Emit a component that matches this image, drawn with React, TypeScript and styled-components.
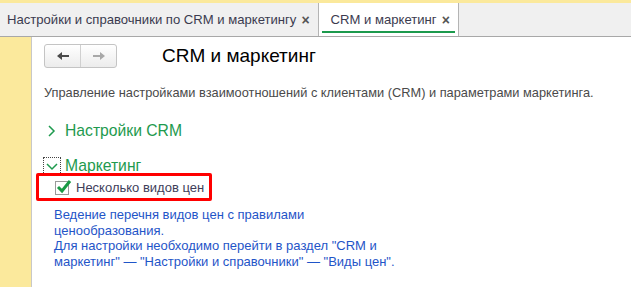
import React from 'react'
import styled, { createGlobalStyle } from 'styled-components'

const GlobalStyle = createGlobalStyle`
  html, body {
    margin: 0;
    padding: 0;
    background: #fff;
  }
  body {
    font-family: Arial, "Liberation Sans", sans-serif;
    width: 631px;
    height: 287px;
    overflow: hidden;
  }
`

const Page = styled.div`
  display: flex;
  flex-direction: column;
  width: 631px;
  height: 287px;
`

const TopStrip = styled.div`
  height: 3px;
  background: #fbe99c;
`

const TabBar = styled.div`
  display: flex;
  height: 33px;
  background: #f0f0f0;
  border-bottom: 1px solid #a8a8a8;
`

const Tab = styled.div<{ active?: boolean }>`
  position: relative;
  display: flex;
  align-items: center;
  gap: 5px;
  padding: 0 8px 0 ${({ active }) => (active ? '12px' : '7px')};
  background: ${({ active }) => (active ? '#fff' : 'transparent')};
  border-right: 1px solid #b4b4b4;
  font-size: 13.1px;
  color: #3b3b4f;

  &::after {
    content: '';
    display: ${({ active }) => (active ? 'block' : 'none')};
    position: absolute;
    left: 3px;
    right: 3px;
    bottom: 3px;
    height: 2px;
    background: #1c9a4d;
  }
`

const Close = styled.span`
  font-size: 14px;
  font-weight: bold;
  color: #555;
`

const Body = styled.div`
  flex: 1;
  display: flex;
`

const Sidebar = styled.div`
  width: 31px;
  background: #fbe99c;
  border-right: 1px solid #c8c8c8;
`

const Content = styled.div`
  flex: 1;
  padding: 7px 0 0 12px;
`

const Header = styled.div`
  display: flex;
  align-items: center;
  gap: 45px;
`

const NavGroup = styled.div`
  display: flex;
  width: 73px;
  height: 24px;
  box-sizing: border-box;
  border: 1px solid #c4c4c4;
  border-radius: 3px;
  background: linear-gradient(#ffffff, #ececec);
`

const NavButton = styled.div<{ divider?: boolean }>`
  flex: 1;
  display: flex;
  align-items: center;
  justify-content: center;
  border-right: ${({ divider }) => (divider ? '1px solid #d0d0d0' : 'none')};
`

const Title = styled.h1`
  margin: 0;
  font-size: 19px;
  font-weight: normal;
  color: #000;
`

const Description = styled.p`
  margin: 17px 0 0;
  font-size: 12.8px;
  line-height: 15px;
  color: #4a4a4a;
`

const Group = styled.div<{ top: number }>`
  display: flex;
  align-items: center;
  gap: 5px;
  height: 18px;
  margin-top: ${({ top }) => top}px;
  font-size: 15.7px;
  color: #1e9a4e;
`

const Toggle = styled.span<{ focused?: boolean }>`
  display: flex;
  align-items: center;
  justify-content: center;
  width: 16px;
  height: 16px;
  box-sizing: border-box;
  outline: ${({ focused }) => (focused ? '1px dotted #444' : 'none')};
`

const Highlight = styled.div`
  display: inline-flex;
  align-items: center;
  gap: 7px;
  height: 28px;
  box-sizing: border-box;
  margin: -2px 0 0 -8px;
  padding: 1px 5px 0 16px;
  border: 3px solid #ff0000;
  border-radius: 2px;
`

const Box = styled.span`
  position: relative;
  width: 14px;
  height: 14px;
  box-sizing: border-box;
  border: 1px solid #9a9a9a;
  background: #fff;
`

const Check = styled.svg`
  position: absolute;
  left: 0px;
  top: -3px;
`

const CheckLabel = styled.span`
  font-size: 13px;
  color: #3e3e5a;
`

const Hint = styled.div`
  margin: 6px 0 0 10px;
  width: 350px;
  font-size: 13px;
  line-height: 15.7px;
  color: #1f55c8;
`

export default function App() {
  return (
    <Page>
      <GlobalStyle />
      <TopStrip />
      <TabBar>
        <Tab>
          Настройки и справочники по CRM и маркетингу <Close>×</Close>
        </Tab>
        <Tab active>
          CRM и маркетинг <Close>×</Close>
        </Tab>
      </TabBar>
      <Body>
        <Sidebar />
        <Content>
          <Header>
            <NavGroup>
              <NavButton divider>
                <svg width="14" height="10" viewBox="0 0 14 10">
                  <path d="M1 5 L6 1 V4 H13 V6 H6 V9 Z" fill="#4a4a4a" />
                </svg>
              </NavButton>
              <NavButton>
                <svg width="14" height="10" viewBox="0 0 14 10">
                  <path d="M13 5 L8 1 V4 H1 V6 H8 V9 Z" fill="#a8a8a8" />
                </svg>
              </NavButton>
            </NavGroup>
            <Title>CRM и маркетинг</Title>
          </Header>
          <Description>
            Управление настройками взаимоотношений с клиентами (CRM) и параметрами маркетинга.
          </Description>
          <Group top={22}>
            <Toggle>
              <svg width="10" height="12" viewBox="0 0 10 12">
                <path d="M2 1 L7 6 L2 11" stroke="#1e9a4e" strokeWidth="1.5" fill="none" />
              </svg>
            </Toggle>
            Настройки CRM
          </Group>
          <Group top={17}>
            <Toggle focused>
              <svg width="12" height="10" viewBox="0 0 12 10">
                <path d="M1 3 L6 8 L11 3" stroke="#1e9a4e" strokeWidth="1.5" fill="none" />
              </svg>
            </Toggle>
            Маркетинг
          </Group>
          <Highlight>
            <Box>
              <Check width="16" height="16" viewBox="0 0 16 16">
                <path d="M2 8 L6 12 L14 2" stroke="#1a9a45" strokeWidth="3" fill="none" />
              </Check>
            </Box>
            <CheckLabel>Несколько видов цен</CheckLabel>
          </Highlight>
          <Hint>
            Ведение перечня видов цен с правилами ценообразования.
            <br />
            Для настройки необходимо перейти в раздел "CRM и маркетинг" — "Настройки и справочники" — "Виды цен".
          </Hint>
        </Content>
      </Body>
    </Page>
  )
}
